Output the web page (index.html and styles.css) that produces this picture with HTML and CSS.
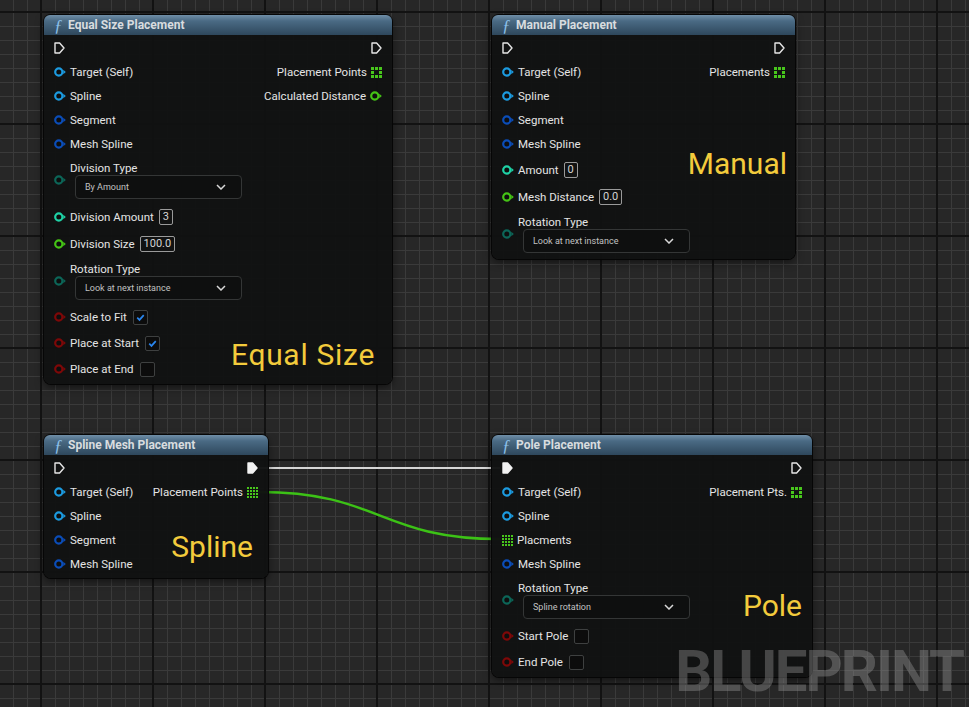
FILE: index.html
```html
<!DOCTYPE html>
<html lang="en">
  <head>
    <meta charset="utf-8" />
    <title>Blueprint - Placement nodes</title>
    <link rel="stylesheet" href="styles.css">
  </head>
  <body>
    <svg class="defs" width="0" height="0">
      <symbol id="pin" viewBox="0 0 12 10">
        <circle cx="4.8" cy="5" r="3.6" fill="#0e0e0e" stroke="currentColor" stroke-width="2.2" />
        <polygon points="9.3,2.8 11.8,5 9.3,7.2" fill="currentColor" />
      </symbol>
      <symbol id="exec" viewBox="0 0 11 12">
        <path d="M1 1 H5.6 L10 6 L5.6 11 H1 Z" fill="none" stroke="#e6e6e6" stroke-width="1.4" stroke-linejoin="round" />
      </symbol>
      <symbol id="exec-on" viewBox="0 0 11 12">
        <path d="M1 1 H5.6 L10 6 L5.6 11 H1 Z" fill="#f2f2f2" stroke="#f2f2f2" stroke-width="1.4" stroke-linejoin="round" />
      </symbol>
      <symbol id="arr" viewBox="0 0 11 11">
        <rect x="0" y="0" width="3" height="3" /><rect x="4" y="0" width="3" height="3" /><rect x="8" y="0" width="3" height="3" />
        <rect x="0" y="4" width="3" height="3" /><rect x="8" y="4" width="3" height="3" />
        <rect x="0" y="8" width="3" height="3" /><rect x="4" y="8" width="3" height="3" /><rect x="8" y="8" width="3" height="3" />
      </symbol>
      <symbol id="arr-on" viewBox="0 0 11 11">
        <rect x="0" y="0" width="2" height="2" /><rect x="3" y="0" width="2" height="2" /><rect x="6" y="0" width="2" height="2" /><rect x="9" y="0" width="2" height="2" />
        <rect x="0" y="3" width="2" height="2" /><rect x="3" y="3" width="2" height="2" /><rect x="6" y="3" width="2" height="2" /><rect x="9" y="3" width="2" height="2" />
        <rect x="0" y="6" width="2" height="2" /><rect x="3" y="6" width="2" height="2" /><rect x="6" y="6" width="2" height="2" /><rect x="9" y="6" width="2" height="2" />
        <rect x="0" y="9" width="2" height="2" /><rect x="3" y="9" width="2" height="2" /><rect x="6" y="9" width="2" height="2" /><rect x="9" y="9" width="2" height="2" />
      </symbol>
      <symbol id="chev" viewBox="0 0 10 6">
        <path d="M1 1 L5 5 L9 1" fill="none" stroke="#d8d8d8" stroke-width="1.5" />
      </symbol>
      <symbol id="tick" viewBox="0 0 14 14">
        <path d="M3.5 7.2 L5.9 9.6 L10.5 4.4" fill="none" stroke="#2a86ee" stroke-width="1.8" />
      </symbol>
    </svg>

    <div class="graph">
      <svg class="wires" width="969" height="707">
        <path d="M259 468 H500" stroke="#d6d6d6" stroke-width="2" fill="none" />
        <path d="M259 492 C380 492 380 539 500 539" stroke="#3cc216" stroke-width="2.5" fill="none" />
      </svg>

      <!-- Equal Size Placement -->
      <div class="node node-equal">
        <div class="node-head"><span class="fn">ƒ</span>Equal Size Placement</div>
        <div class="node-body">
          <div class="row">
            <svg class="exec"><use href="#exec" /></svg>
            <svg class="exec"><use href="#exec" /></svg>
          </div>
          <div class="row">
            <div class="pin-in"><svg class="pin obj"><use href="#pin" /></svg>Target (Self)</div>
            <div class="pin-out">Placement Points<svg class="arr"><use href="#arr" /></svg></div>
          </div>
          <div class="row">
            <div class="pin-in"><svg class="pin obj"><use href="#pin" /></svg>Spline</div>
            <div class="pin-out">Calculated Distance<svg class="pin float"><use href="#pin" /></svg></div>
          </div>
          <div class="row">
            <div class="pin-in"><svg class="pin ref"><use href="#pin" /></svg>Segment</div>
          </div>
          <div class="row">
            <div class="pin-in"><svg class="pin ref"><use href="#pin" /></svg>Mesh Spline</div>
          </div>
          <div class="row enum">
            <svg class="pin enum-pin"><use href="#pin" /></svg>
            <div class="enum-col">
              <span>Division Type</span>
              <div class="dropdown"><span>By Amount</span><svg class="chev"><use href="#chev" /></svg></div>
            </div>
          </div>
          <div class="row val">
            <div class="pin-in"><svg class="pin int"><use href="#pin" /></svg>Division Amount<span class="value">3</span></div>
          </div>
          <div class="row val">
            <div class="pin-in"><svg class="pin float"><use href="#pin" /></svg>Division Size<span class="value">100.0</span></div>
          </div>
          <div class="row enum">
            <svg class="pin enum-pin"><use href="#pin" /></svg>
            <div class="enum-col">
              <span>Rotation Type</span>
              <div class="dropdown"><span>Look at next instance</span><svg class="chev"><use href="#chev" /></svg></div>
            </div>
          </div>
          <div class="row check">
            <div class="pin-in"><svg class="pin bool"><use href="#pin" /></svg>Scale to Fit<span class="box"><svg><use href="#tick" /></svg></span></div>
          </div>
          <div class="row check">
            <div class="pin-in"><svg class="pin bool"><use href="#pin" /></svg>Place at Start<span class="box"><svg><use href="#tick" /></svg></span></div>
          </div>
          <div class="row check">
            <div class="pin-in"><svg class="pin bool"><use href="#pin" /></svg>Place at End<span class="box"></span></div>
          </div>
        </div>
        <div class="tag tag-equal">Equal Size</div>
      </div>

      <!-- Manual Placement -->
      <div class="node node-manual">
        <div class="node-head"><span class="fn">ƒ</span>Manual Placement</div>
        <div class="node-body">
          <div class="row">
            <svg class="exec"><use href="#exec" /></svg>
            <svg class="exec"><use href="#exec" /></svg>
          </div>
          <div class="row">
            <div class="pin-in"><svg class="pin obj"><use href="#pin" /></svg>Target (Self)</div>
            <div class="pin-out">Placements<svg class="arr"><use href="#arr" /></svg></div>
          </div>
          <div class="row">
            <div class="pin-in"><svg class="pin obj"><use href="#pin" /></svg>Spline</div>
          </div>
          <div class="row">
            <div class="pin-in"><svg class="pin ref"><use href="#pin" /></svg>Segment</div>
          </div>
          <div class="row">
            <div class="pin-in"><svg class="pin ref"><use href="#pin" /></svg>Mesh Spline</div>
          </div>
          <div class="row val">
            <div class="pin-in"><svg class="pin int"><use href="#pin" /></svg>Amount<span class="value">0</span></div>
          </div>
          <div class="row val">
            <div class="pin-in"><svg class="pin float"><use href="#pin" /></svg>Mesh Distance<span class="value">0.0</span></div>
          </div>
          <div class="row enum">
            <svg class="pin enum-pin"><use href="#pin" /></svg>
            <div class="enum-col">
              <span>Rotation Type</span>
              <div class="dropdown"><span>Look at next instance</span><svg class="chev"><use href="#chev" /></svg></div>
            </div>
          </div>
        </div>
        <div class="tag tag-manual">Manual</div>
      </div>

      <!-- Spline Mesh Placement -->
      <div class="node node-spline">
        <div class="node-head"><span class="fn">ƒ</span>Spline Mesh Placement</div>
        <div class="node-body">
          <div class="row">
            <svg class="exec"><use href="#exec" /></svg>
            <svg class="exec"><use href="#exec-on" /></svg>
          </div>
          <div class="row">
            <div class="pin-in"><svg class="pin obj"><use href="#pin" /></svg>Target (Self)</div>
            <div class="pin-out">Placement Points<svg class="arr"><use href="#arr-on" /></svg></div>
          </div>
          <div class="row">
            <div class="pin-in"><svg class="pin obj"><use href="#pin" /></svg>Spline</div>
          </div>
          <div class="row">
            <div class="pin-in"><svg class="pin ref"><use href="#pin" /></svg>Segment</div>
          </div>
          <div class="row">
            <div class="pin-in"><svg class="pin ref"><use href="#pin" /></svg>Mesh Spline</div>
          </div>
        </div>
        <div class="tag tag-spline">Spline</div>
      </div>

      <!-- Pole Placement -->
      <div class="node node-pole">
        <div class="node-head"><span class="fn">ƒ</span>Pole Placement</div>
        <div class="node-body">
          <div class="row">
            <svg class="exec"><use href="#exec-on" /></svg>
            <svg class="exec"><use href="#exec" /></svg>
          </div>
          <div class="row">
            <div class="pin-in"><svg class="pin obj"><use href="#pin" /></svg>Target (Self)</div>
            <div class="pin-out">Placement Pts.<svg class="arr"><use href="#arr" /></svg></div>
          </div>
          <div class="row">
            <div class="pin-in"><svg class="pin obj"><use href="#pin" /></svg>Spline</div>
          </div>
          <div class="row">
            <div class="pin-in"><svg class="arr"><use href="#arr-on" /></svg>Placments</div>
          </div>
          <div class="row">
            <div class="pin-in"><svg class="pin ref"><use href="#pin" /></svg>Mesh Spline</div>
          </div>
          <div class="row enum">
            <svg class="pin enum-pin"><use href="#pin" /></svg>
            <div class="enum-col">
              <span>Rotation Type</span>
              <div class="dropdown"><span>Spline rotation</span><svg class="chev"><use href="#chev" /></svg></div>
            </div>
          </div>
          <div class="row check">
            <div class="pin-in"><svg class="pin bool"><use href="#pin" /></svg>Start Pole<span class="box"></span></div>
          </div>
          <div class="row check">
            <div class="pin-in"><svg class="pin bool"><use href="#pin" /></svg>End Pole<span class="box"></span></div>
          </div>
        </div>
        <div class="tag tag-pole">Pole</div>
      </div>

      <div class="watermark">BLUEPRINT</div>
    </div>
  </body>
</html>
```

FILE: styles.css
```css
body {
  margin: 0;
  background: #262626;
  font-family: Roboto, "Noto Sans", sans-serif;
}
.defs {
  position: absolute;
}

/* graph canvas with the major / minor grid */
.graph {
  position: relative;
  width: 969px;
  height: 707px;
  overflow: hidden;
  background-color: #272727;
  background-image:
    linear-gradient(to right, #121212 0 2px, transparent 2px),
    linear-gradient(to bottom, #121212 0 2px, transparent 2px),
    linear-gradient(to right, #3a3a3a 0 1px, transparent 1px),
    linear-gradient(to bottom, #3a3a3a 0 1px, transparent 1px);
  background-size: 112px 100%, 100% 112px, 14px 100%, 100% 14px;
  background-position: 40px 0, 0 11px, 41px 0, 0 12px;
}
.wires {
  position: absolute;
  left: 0;
  top: 0;
}

/* nodes */
.node {
  position: absolute;
  background: rgba(17, 18, 18, 0.97);
  border-radius: 7px;
  box-shadow: 0 0 0 1px #060606, 0 3px 8px rgba(0, 0, 0, 0.55);
  color: #e4e4e4;
  font-size: 11.5px;
}
.node-equal { left: 44px; top: 15px; width: 348px; }
.node-manual { left: 492px; top: 15px; width: 303px; }
.node-spline { left: 44px; top: 435px; width: 224px; }
.node-pole { left: 492px; top: 435px; width: 320px; }

.node-head {
  height: 20px;
  display: flex;
  align-items: center;
  padding-left: 10px;
  border-radius: 6px 6px 0 0;
  background: linear-gradient(180deg, #6f8ea7 0%, #4a6a84 30%, #2e475c 100%);
  color: #d8dcdf;
  font-size: 12px;
  font-weight: 700;
}
.fn {
  font-family: "Liberation Serif", serif;
  font-style: italic;
  font-weight: 400;
  font-size: 17px;
  line-height: 17px;
  color: #8cc0ea;
  width: 14px;
}
.node-body {
  padding: 1px 0 2px;
}

.row {
  height: 24px;
  display: flex;
  align-items: center;
  justify-content: space-between;
  padding: 0 10px;
}
.row.val { height: 27px; }
.row.check { height: 26px; }
.row.enum {
  height: 47px;
  justify-content: flex-start;
  gap: 4px;
}
.pin-in, .pin-out {
  display: flex;
  align-items: center;
  gap: 4px;
  white-space: nowrap;
}

.exec { width: 11px; height: 12px; }
.pin { width: 12px; height: 10px; flex: none; }
.arr { width: 11px; height: 11px; fill: #48c61c; flex: none; }

.obj { color: #1c9be0; }
.ref { color: #0b4db8; }
.int { color: #1fd2a6; }
.float { color: #45c416; }
.bool { color: #7e0808; }
.enum-pin { color: #0c6658; }

.enum-col {
  display: flex;
  flex-direction: column;
}
.enum-col > span {
  line-height: 14px;
}
.dropdown {
  box-sizing: border-box;
  width: 167px;
  height: 24px;
  margin-left: 5px;
  display: flex;
  align-items: center;
  justify-content: space-between;
  padding: 0 15px 0 9px;
  background: #0e0f0f;
  border: 1px solid #343636;
  border-radius: 4px;
  color: #c2c2c2;
  font-size: 9px;
}
.chev { width: 10px; height: 6px; }

.value {
  margin-left: 1px;
  height: 16px;
  box-sizing: border-box;
  padding: 0 3px;
  border: 1px solid #9a9a9a;
  border-radius: 2px;
  line-height: 14px;
  color: #d4d4d4;
  font-size: 11px;
}
.box {
  margin-left: 2px;
  width: 15px;
  height: 15px;
  box-sizing: border-box;
  border: 1px solid #3e4040;
  border-radius: 2px;
  background: #0c0c0c;
}
.box svg {
  display: block;
  width: 13px;
  height: 13px;
}

/* big yellow annotations */
.tag {
  position: absolute;
  color: #f3cb3c;
  font-size: 30px;
  line-height: 30px;
  white-space: nowrap;
}
.tag-equal { right: 17px; top: 325px; letter-spacing: 0.7px; }
.tag-manual { right: 8px; top: 134px; }
.tag-spline { right: 15px; top: 97px; }
.tag-pole { right: 10px; top: 156px; }

.watermark {
  position: absolute;
  right: 6px;
  top: 637px;
  font-size: 58px;
  font-weight: 700;
  letter-spacing: -2px;
  color: rgba(150, 150, 150, 0.4);
}
```
